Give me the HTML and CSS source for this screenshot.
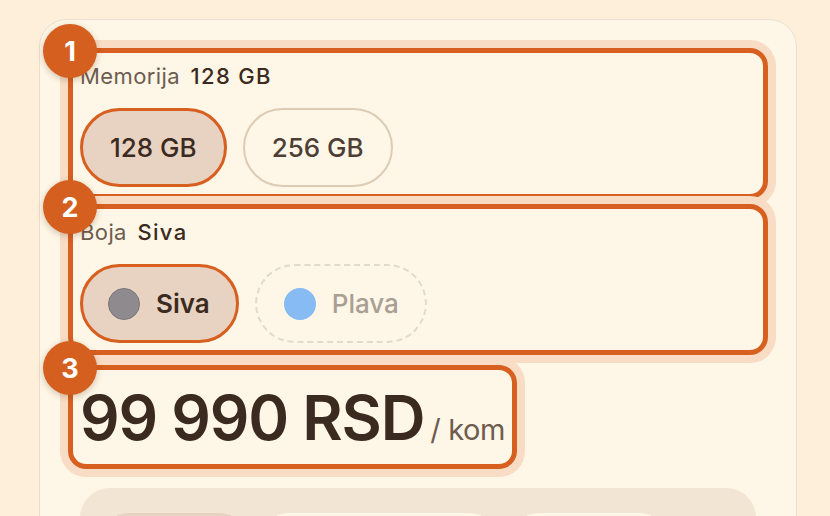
FILE: index.html
```html
<!DOCTYPE html>
<html lang="sr">
<head>
  <meta charset="UTF-8" />
  <meta name="viewport" content="width=device-width, initial-scale=1.0" />
  <title>Izbor modela</title>
  <link rel="stylesheet" href="styles.css">
</head>
<body>

<div class="card">

  <div class="step">
    <span class="badge">1</span>
    <div class="label">Memorija <b>128 GB</b></div>
    <div class="options">
      <button class="pill active">128 GB</button>
      <button class="pill">256 GB</button>
    </div>
  </div>

  <div class="step step-2">
    <span class="badge">2</span>
    <div class="label">Boja <b>Siva</b></div>
    <div class="options">
      <button class="pill pill-color active"><i class="swatch swatch-gray"></i>Siva</button>
      <button class="pill pill-color disabled"><i class="swatch swatch-blue"></i>Plava</button>
    </div>
  </div>

  <div class="step step-3 price">
    <span class="badge">3</span>
    <span class="amount">99 990 RSD</span>
    <span class="unit">/ kom</span>
  </div>

  <div class="tabs">
    <span class="tab active"></span>
    <span class="tab tab-wide"></span>
    <span class="tab"></span>
  </div>

</div>

</body>
</html>
```

FILE: styles.css
```css
* {
  box-sizing: border-box;
}

html, body {
  margin: 0;
  padding: 0;
  height: 100%;
  overflow: hidden;
  background: #fdefda;
  font-family: 'Inter', 'Noto Sans', sans-serif;
  color: #3b2a20;
}

.card {
  width: 758px;
  margin: 19px 0 0 39px;
  padding: 28px;
  background: #fef6e6;
  border: 1px solid #eadfd0;
  border-radius: 28px;
}

/* highlighted steps */
.step {
  position: relative;
  padding: 11px 7px 7px;
  border: 5px solid #d75f1f;
  border-radius: 18px;
  box-shadow: 0 0 0 8px #f8dcc4;
}

.step-2 {
  margin-top: 5px;
}

.step-3 {
  margin-top: 10px;
}

.badge {
  position: absolute;
  top: -29px;
  left: -30px;
  width: 54px;
  height: 54px;
  border-radius: 50%;
  background: #d55f1f;
  color: #fff;
  font-size: 27px;
  font-weight: 700;
  letter-spacing: 0;
  display: flex;
  align-items: center;
  justify-content: center;
  box-shadow: 0 2px 6px rgba(80, 40, 10, 0.25);
  z-index: 2;
}

.label {
  font-size: 22px;
  line-height: 24px;
  letter-spacing: 0.4px;
  color: #6d5c50;
}

.label b {
  font-weight: 500;
  color: #3b2a20;
  margin-left: 4px;
  letter-spacing: 1.3px;
}

.options {
  display: flex;
  gap: 16px;
  margin-top: 20px;
}

.pill {
  height: 79px;
  padding: 0 27px;
  border: 2px solid #ddcbb4;
  border-radius: 40px;
  background: transparent;
  font-family: inherit;
  font-size: 26px;
  font-weight: 500;
  color: #4d3f35;
  display: flex;
  align-items: center;
}

.pill.active {
  padding: 0 27px;
  border: 3px solid #d75f1f;
  background: #e8d3c3;
  color: #3b2a20;
}

.pill-color {
  gap: 16px;
  font-weight: 600;
}

.pill-color.active {
  padding: 0 26px 0 25px;
}

.pill.disabled {
  padding: 0 26px 0 27px;
  border: 2px dashed #e3d9cc;
  color: #a99f95;
  font-weight: 500;
}

.swatch {
  width: 32px;
  height: 32px;
  border-radius: 50%;
  display: inline-block;
}

.swatch-gray {
  background: #8e8a8d;
  border: 1px solid #7a7679;
}

.swatch-blue {
  background: #86bcf3;
}

.price {
  display: inline-flex;
  align-items: baseline;
  padding: 12px 7px 10px 7px;
}

.amount {
  font-size: 62px;
  line-height: 72px;
  font-weight: 600;
  letter-spacing: -1.2px;
}

.unit {
  margin-left: 6px;
  font-size: 29px;
  color: #6d5c50;
  letter-spacing: -0.4px;
}

/* tab bar below */
.tabs {
  display: flex;
  gap: 20px;
  margin: 19px 12px 0;
  padding: 25px 24px;
  background: #f2e5d3;
  border-radius: 30px;
}

.tab {
  height: 48px;
  width: 150px;
  border-radius: 24px;
  background: #fef6e6;
}

.tab.active {
  background: #e8d3c3;
  width: 140px;
}

.tab-wide {
  width: 230px;
}
```
